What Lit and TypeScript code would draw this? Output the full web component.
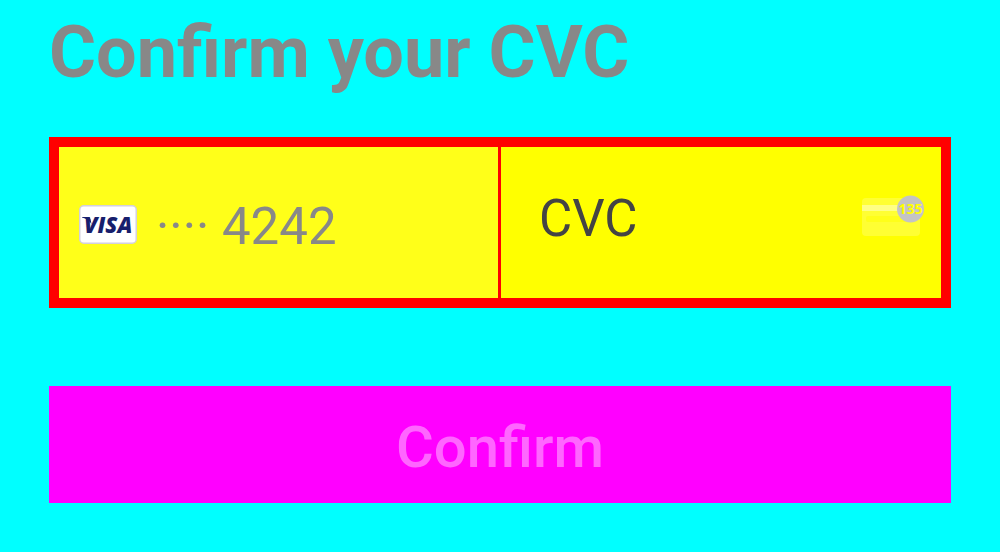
import { LitElement, html, css } from "lit";
import { customElement, property, state } from "lit/decorators.js";

@customElement("visa-badge")
export class VisaBadge extends LitElement {
  static styles = css`
    :host {
      display: block;
      flex: none;
    }
    .card {
      display: block;
      width: 58px;
      height: 39px;
    }
    .word {
      font: italic 800 22px "Open Sans", sans-serif;
      fill: #171e6c;
    }
  `;

  render() {
    return html`
      <svg class="card" viewBox="0 0 58 39" role="img" aria-label="Visa">
        <rect x="0.75" y="0.75" width="56.5" height="37.5" rx="4" fill="#fff" stroke="#d3d0dc" stroke-width="1.5" />
        <path d="M3 12h6q2 0 2.500 2l1 5q-3-5-9.500-6.500z" fill="#171e6c" />
        <text class="word" x="5" y="28">VISA</text>
      </svg>
    `;
  }
}

@customElement("cvc-hint")
export class CvcHint extends LitElement {
  static styles = css`
    :host {
      display: block;
      flex: none;
    }
    .hint {
      display: block;
      width: 64px;
      height: 48px;
    }
    .digits {
      font: 700 14px "Noto Sans", sans-serif;
      fill: #ffff00;
      text-anchor: middle;
    }
  `;

  render() {
    return html`
      <svg class="hint" viewBox="0 0 64 48" aria-hidden="true">
        <rect x="1" y="3" width="58" height="38" rx="4" fill="#ffff33" />
        <rect x="1" y="10" width="58" height="6" fill="#ffff85" />
        <rect x="5" y="21" width="46" height="6" rx="2" fill="#ffff1a" />
        <circle cx="49.5" cy="14" r="13.5" fill="#c4c4c4" />
        <text class="digits" x="49.5" y="19">135</text>
      </svg>
    `;
  }
}

@customElement("app-root")
export class AppRoot extends LitElement {
  @property() last4 = "4242";
  @state() private cvc = "";

  static styles = css`
    :host {
      display: block;
      box-sizing: border-box;
      min-height: 100vh;
      padding: 10px 49px 49px;
      background: #00ffff;
      font-family: Roboto, sans-serif;
    }
    .title {
      margin: 0 0 41px;
      font-size: 72px;
      line-height: 86px;
      font-weight: 700;
      color: #888888;
    }
    .fields {
      display: grid;
      grid-template-columns: calc(50% - 2px) 1fr;
      gap: 3px;
      border: 10px solid #ff0000;
      background: #ff0000;
    }
    .cell {
      display: flex;
      align-items: center;
      min-width: 0;
      font-size: 51px;
      line-height: 60px;
    }
    .saved {
      gap: 19px;
      padding: 50px 20px 41px;
      background: #ffff19;
      color: #888888;
    }
    .logo {
      margin-bottom: 6px;
    }
    .entry {
      padding: 42px 16px 49px 38px;
      background: #ffff00;
    }
    .input {
      flex: 1;
      min-width: 0;
      padding: 0;
      border: 0;
      outline: 0;
      background: transparent;
      font: inherit;
      color: #404040;
    }
    .input::placeholder {
      color: #444444;
      opacity: 1;
    }
    .confirm {
      display: block;
      width: 100%;
      margin-top: 78px;
      padding: 27px 20px 22px;
      border: 0;
      background: #ff00ff;
      color: #ff66ff;
      font: 500 58px/68px Roboto, sans-serif;
    }
  `;

  private onInput(e: Event) {
    this.cvc = (e.target as HTMLInputElement).value;
  }

  render() {
    return html`
      <form @submit=${(e: Event) => e.preventDefault()}>
        <h1 class="title">Confirm your CVC</h1>
        <div class="fields">
          <div class="cell saved">
            <visa-badge class="logo"></visa-badge>
            <span>···· ${this.last4}</span>
          </div>
          <div class="cell entry">
            <input
              class="input"
              aria-label="CVC"
              placeholder="CVC"
              inputmode="numeric"
              maxlength="3"
              .value=${this.cvc}
              @input=${this.onInput}
            />
            <cvc-hint></cvc-hint>
          </div>
        </div>
        <button class="confirm" type="submit" ?disabled=${this.cvc.length < 3}>Confirm</button>
      </form>
    `;
  }
}
